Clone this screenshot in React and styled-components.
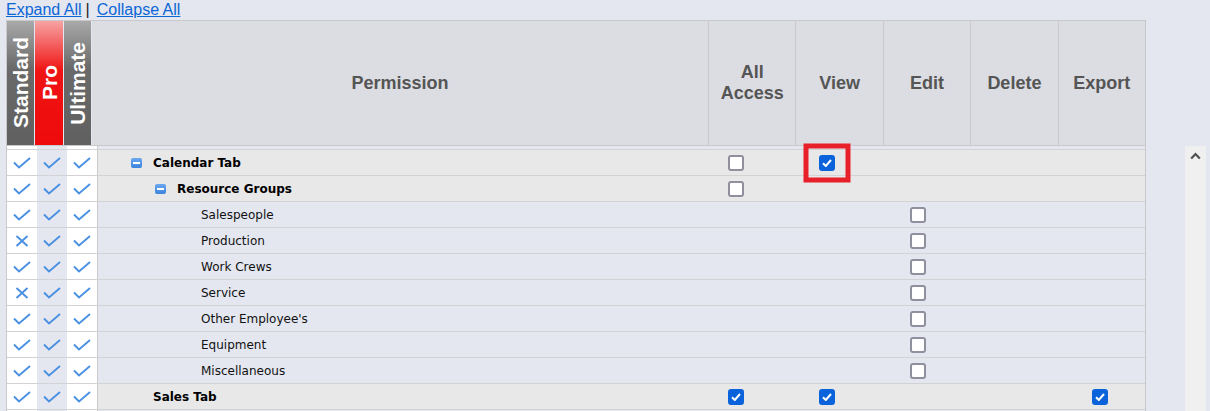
import React from 'react';
import styled, { createGlobalStyle, css } from 'styled-components';

const GlobalStyle = createGlobalStyle`
  html, body {
    margin: 0;
    padding: 0;
    overflow: hidden;
    background: #e4e7f0;
  }
  body {
    font-family: "DejaVu Sans", "Liberation Sans", sans-serif;
  }
`;

const Page = styled.div`
  width: 1210px;
  height: 411px;
  padding-left: 6px;
  box-sizing: border-box;
  overflow: hidden;
`;

const LinkBar = styled.div`
  height: 20px;
  font: 16px/20px "Liberation Sans", Arial, sans-serif;
  color: #222;
  white-space: nowrap;
`;

const Link = styled.a`
  color: #0b66d6;
  text-decoration: underline;
  cursor: pointer;
`;

const Sep = styled.span`
  margin: 0 7px 0 4px;
`;

const HeaderGrid = styled.div`
  display: grid;
  grid-template-columns: 28px 29px 28px 617px repeat(5, 1fr);
  width: 1140px;
  height: 126px;
  box-sizing: border-box;
  border: 1px solid #c9c9cc;
  border-right: none;
  background: #dcdde2;
`;

const tierBg = {
  gray: 'linear-gradient(to bottom, #a9a9a9 0%, #6a6a6a 38%, #606060 100%)',
  red: 'linear-gradient(to bottom, #f7a3a3 0%, #f01414 40%, #ee0a0a 100%)',
};

const TierCell = styled.div`
  display: flex;
  align-items: center;
  justify-content: center;
  border-right: 1px solid #e4e7f0;
  background: ${(p) => tierBg[p.$tone]};
`;

const TierLabel = styled.span`
  writing-mode: vertical-rl;
  transform: rotate(180deg);
  font: bold 21px/1 "Liberation Sans", Arial, sans-serif;
  color: #fff;
  white-space: nowrap;
`;

const HeadCell = styled.div`
  display: flex;
  align-items: center;
  justify-content: center;
  text-align: center;
  border-right: 1px solid #c9c9cc;
  font: bold 18px/21px "Liberation Sans", Arial, sans-serif;
  color: #555;
`;

const BodyWrap = styled.div`
  display: flex;
  justify-content: space-between;
  align-items: flex-start;
  width: 1200px;
`;

const Table = styled.div`
  width: 1140px;
  box-sizing: border-box;
  border-left: 1px solid #c9c9cc;
  border-right: 1px solid #c9c9cc;
`;

const columns = '30px 30px 31px 592px repeat(5, 91px)';

const Row = styled.div`
  display: grid;
  grid-template-columns: ${columns};
  height: 26px;
  box-sizing: border-box;
  border-top: 1px solid #d3d3d6;
  background: ${(p) => (p.$group ? '#e8e8e8' : '#e4e7f0')};
`;

const SpacerRow = styled(Row)`
  height: 3px;
  border-top: none;
`;

const TierMark = styled.div`
  display: flex;
  align-items: center;
  justify-content: center;
  background: ${(p) => (p.$alt ? '#e4e7f0' : '#ffffff')};
  ${(p) =>
    p.$last &&
    css`
      border-right: 1px solid #c9c9cc;
    `}
`;

const NameCell = styled.div`
  display: flex;
  align-items: center;
  padding-left: ${(p) => 33 + p.$level * 24}px;
  font-size: 12px;
  font-weight: ${(p) => (p.$group ? 'bold' : 'normal')};
  color: ${(p) => (p.$group ? '#000' : '#111')};
  white-space: nowrap;
`;

const Toggle = styled.span`
  position: relative;
  flex: none;
  width: 11px;
  height: 10px;
  margin-right: 11px;
  border-radius: 2px;
  background: ${(p) => (p.$visible ? 'linear-gradient(to bottom, #6aa8ee, #3c84dc)' : 'transparent')};
  &::after {
    content: '';
    display: ${(p) => (p.$visible ? 'block' : 'none')};
    position: absolute;
    left: 2px;
    right: 2px;
    top: 4px;
    height: 2px;
    background: #fff;
  }
`;

const BoxCell = styled.div`
  position: relative;
  display: flex;
  align-items: center;
  justify-content: center;
`;

const Box = styled.span`
  display: flex;
  align-items: center;
  justify-content: center;
  width: 16px;
  height: 16px;
  box-sizing: border-box;
  border-radius: 3px;
  border: 2px solid ${(p) => (p.$checked ? '#0b63dc' : '#8f8f9d')};
  background: ${(p) => (p.$checked ? '#0b63dc' : '#ffffff')};
`;

const Highlight = styled.span`
  position: absolute;
  left: 50%;
  top: 50%;
  width: 47px;
  height: 39px;
  box-sizing: border-box;
  transform: translate(-50%, -50%);
  border: 5px solid #e8202a;
  pointer-events: none;
`;

const ScrollTrack = styled.div`
  width: 21px;
  height: 270px;
  background: #f0f0f0;
  display: flex;
  justify-content: center;
  padding-top: 6px;
  box-sizing: border-box;
`;

const CheckGlyph = () => (
  <svg width="18" height="12" viewBox="0 0 18 12">
    <path d="M1 5.5 L6 10.5 L17 1" fill="none" stroke="#4a90e2" strokeWidth="1.9" />
  </svg>
);

const CrossGlyph = () => (
  <svg width="14" height="12" viewBox="0 0 14 12">
    <path d="M1.5 1 L12.5 11 M12.5 1 L1.5 11" fill="none" stroke="#4a90e2" strokeWidth="1.9" />
  </svg>
);

const BoxTick = () => (
  <svg width="10" height="8" viewBox="0 0 10 8">
    <path d="M1 4.2 L3.8 7 L9 1" fill="none" stroke="#fff" strokeWidth="2" />
  </svg>
);

const Checkbox = ({ checked }) => (
  <Box $checked={checked}>{checked && <BoxTick />}</Box>
);

const ACTIONS = ['all', 'view', 'edit', 'delete', 'export'];

const rows = [
  { id: 'cal', label: 'Calendar Tab', level: 0, group: true, toggle: true, tiers: [1, 1, 1], boxes: { all: false, view: true }, highlight: 'view' },
  { id: 'rg', label: 'Resource Groups', level: 1, group: true, toggle: true, tiers: [1, 1, 1], boxes: { all: false } },
  { id: 'sp', label: 'Salespeople', level: 2, tiers: [1, 1, 1], boxes: { edit: false } },
  { id: 'pr', label: 'Production', level: 2, tiers: [0, 1, 1], boxes: { edit: false } },
  { id: 'wc', label: 'Work Crews', level: 2, tiers: [1, 1, 1], boxes: { edit: false } },
  { id: 'sv', label: 'Service', level: 2, tiers: [0, 1, 1], boxes: { edit: false } },
  { id: 'oe', label: "Other Employee's", level: 2, tiers: [1, 1, 1], boxes: { edit: false } },
  { id: 'eq', label: 'Equipment', level: 2, tiers: [1, 1, 1], boxes: { edit: false } },
  { id: 'mi', label: 'Miscellaneous', level: 2, tiers: [1, 1, 1], boxes: { edit: false } },
  { id: 'st', label: 'Sales Tab', level: 0, group: true, tiers: [1, 1, 1], boxes: { all: true, view: true, export: true } },
  { id: 'next', label: '', level: 1, tiers: [1, 1, 1], boxes: {} },
];

export default function App() {
  return (
    <Page>
      <GlobalStyle />
      <LinkBar>
        <Link>Expand All</Link>
        <Sep>|</Sep>
        <Link>Collapse All</Link>
      </LinkBar>

      <HeaderGrid>
        <TierCell $tone="gray"><TierLabel>Standard</TierLabel></TierCell>
        <TierCell $tone="red"><TierLabel>Pro</TierLabel></TierCell>
        <TierCell $tone="gray"><TierLabel>Ultimate</TierLabel></TierCell>
        <HeadCell>Permission</HeadCell>
        <HeadCell>All<br />Access</HeadCell>
        <HeadCell>View</HeadCell>
        <HeadCell>Edit</HeadCell>
        <HeadCell>Delete</HeadCell>
        <HeadCell>Export</HeadCell>
      </HeaderGrid>

      <BodyWrap>
        <Table>
          <SpacerRow>
            <TierMark />
            <TierMark $alt />
            <TierMark $last />
          </SpacerRow>
          {rows.map((r) => (
            <Row key={r.id} $group={r.group}>
              {r.tiers.map((t, i) => (
                <TierMark key={i} $alt={i === 1} $last={i === 2}>
                  {t ? <CheckGlyph /> : <CrossGlyph />}
                </TierMark>
              ))}
              <NameCell $level={r.level} $group={r.group}>
                <Toggle $visible={r.toggle} />
                {r.label}
              </NameCell>
              {ACTIONS.map((a) => (
                <BoxCell key={a}>
                  {a in r.boxes && <Checkbox checked={r.boxes[a]} />}
                  {r.highlight === a && <Highlight />}
                </BoxCell>
              ))}
            </Row>
          ))}
        </Table>
        <ScrollTrack>
          <svg width="11" height="8" viewBox="0 0 11 8">
            <path d="M1.2 6.5 L5.5 2 L9.8 6.5" fill="none" stroke="#505050" strokeWidth="2.2" />
          </svg>
        </ScrollTrack>
      </BodyWrap>
    </Page>
  );
}
